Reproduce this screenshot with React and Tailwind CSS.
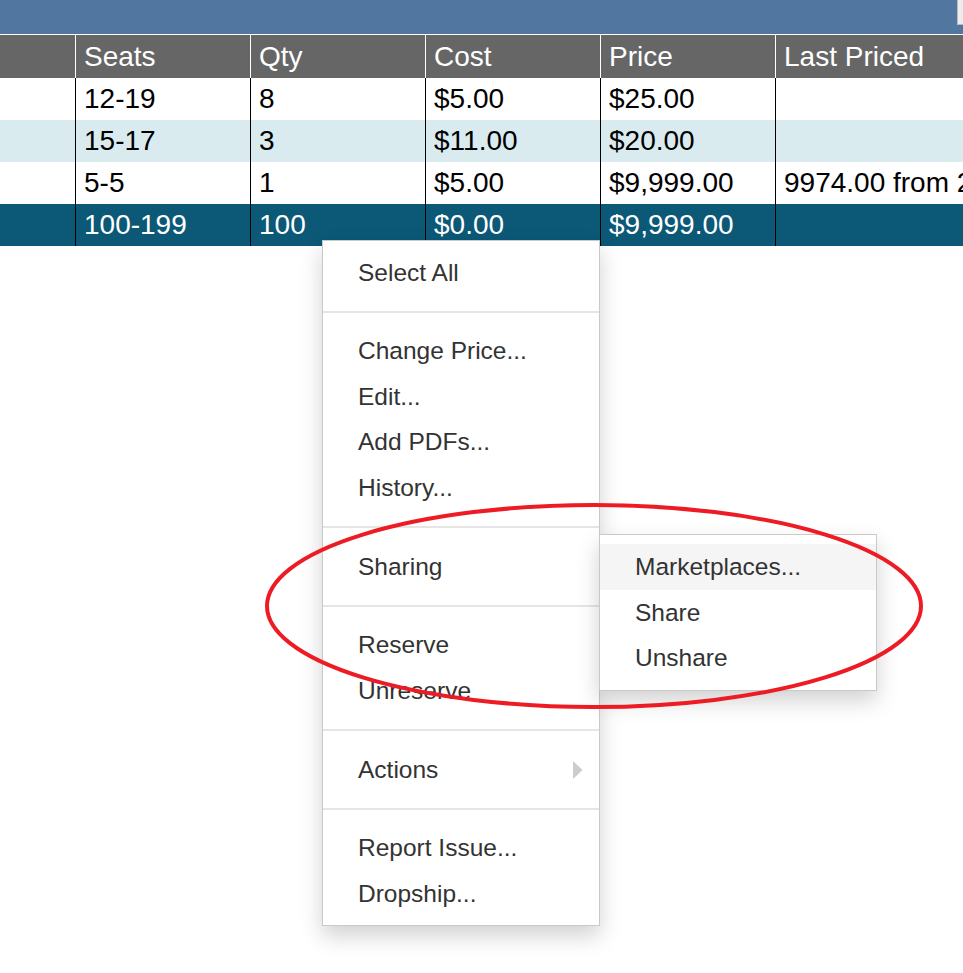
import React from "react";

const columns = ["", "Seats", "Qty", "Cost", "Price", "Last Priced"];

const rows = [
  { cells: ["", "12-19", "8", "$5.00", "$25.00", ""], tone: "white" },
  { cells: ["", "15-17", "3", "$11.00", "$20.00", ""], tone: "alt" },
  { cells: ["", "5-5", "1", "$5.00", "$9,999.00", "9974.00 from 2"], tone: "white" },
  { cells: ["", "100-199", "100", "$0.00", "$9,999.00", ""], tone: "selected" },
];

const widths = ["w-[75px]", "w-[175px]", "w-[175px]", "w-[175px]", "w-[175px]", "w-[188px]"];

const rowBg = {
  white: "bg-white text-black",
  alt: "bg-[#daebf0] text-black",
  selected: "bg-[#0b5877] text-white",
};

function HeaderRow() {
  return (
    <div className="flex h-[44px] border-t border-white bg-[#666666] text-white">
      {columns.map((c, i) => (
        <div
          key={i}
          className={`${widths[i]} shrink-0 flex items-center overflow-hidden whitespace-nowrap pl-[8px] ${i > 0 ? "border-l border-white" : ""}`}
        >
          {c}
        </div>
      ))}
    </div>
  );
}

function BodyRow({ row }) {
  return (
    <div className={`flex h-[42px] ${rowBg[row.tone]}`}>
      {row.cells.map((c, i) => (
        <div
          key={i}
          className={`${widths[i]} shrink-0 flex items-center overflow-hidden whitespace-nowrap pl-[8px] ${i > 0 ? "border-l border-black" : ""}`}
        >
          {c}
        </div>
      ))}
    </div>
  );
}

function Item({ children, active }) {
  return (
    <div className={`h-[45.5px] leading-[45.5px] pl-[35px] pr-[20px] whitespace-nowrap ${active ? "bg-[#f5f5f5]" : ""}`}>
      {children}
    </div>
  );
}

function Divider() {
  return <div className="h-[2px] my-[15.6px] bg-[#e5e5e5]" />;
}

function ContextMenu() {
  return (
    <div className="absolute left-[322px] top-[240px] w-[278px] bg-white border border-[#c9c9c9] pt-[8.75px] pb-[8.75px] text-[24.5px] text-[#333333] shadow-[0_10px_21px_rgba(0,0,0,0.18)]">
      <Item>Select All</Item>
      <Divider />
      <Item>Change Price...</Item>
      <Item>Edit...</Item>
      <Item>Add PDFs...</Item>
      <Item>History...</Item>
      <Divider />
      <div className="relative">
        <Item>Sharing</Item>
        {/* submenu flyout */}
        <div className="absolute left-[276px] top-[-10px] w-[278px] bg-white border border-[#c9c9c9] pt-[9.75px] pb-[8.75px] shadow-[0_10px_21px_rgba(0,0,0,0.18)]">
          <Item active>Marketplaces...</Item>
          <Item>Share</Item>
          <Item>Unshare</Item>
        </div>
      </div>
      <Divider />
      <Item>Reserve</Item>
      <Item>Unreserve</Item>
      <Divider />
      <div className="relative">
        <Item>Actions</Item>
        <svg className="absolute left-[250px] top-[14px]" width="10" height="18" viewBox="0 0 10 18">
          <path d="M0 0 L9.5 9 L0 18 Z" fill="#cccccc" />
        </svg>
      </div>
      <Divider />
      <Item>Report Issue...</Item>
      <Item>Dropship...</Item>
    </div>
  );
}

export default function App() {
  return (
    <div className="relative w-[963px] h-[973px] overflow-hidden bg-white font-['Liberation_Sans',Arial,sans-serif]">
      <div className="h-[34px] bg-[#51769f] flex justify-end">
        <div className="w-[6px] h-[25px] bg-[#ececec] border-l border-b border-[#bcbcbc]" />
      </div>
      <div className="text-[28px]">
        <HeaderRow />
        {rows.map((r, i) => (
          <BodyRow key={i} row={r} />
        ))}
      </div>

      <ContextMenu />

      <svg className="absolute left-0 top-0 pointer-events-none" width="963" height="973" viewBox="0 0 963 973">
        <ellipse cx="594" cy="606" rx="327" ry="101" fill="none" stroke="#ed1c24" strokeWidth="4" />
      </svg>
    </div>
  );
}
